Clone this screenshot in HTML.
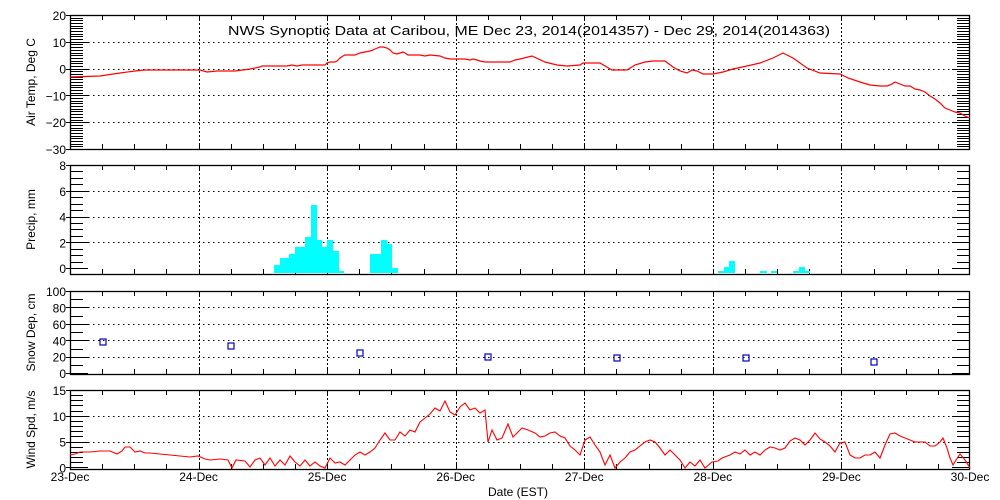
<!DOCTYPE html>
<html><head><meta charset="utf-8"><style>
html,body{margin:0;padding:0;background:#fff;}
svg{display:block;}
text{font-family:"Liberation Sans",sans-serif;font-size:12px;fill:#000;}
</style></head><body>
<svg id="s" width="1000" height="500" xmlns="http://www.w3.org/2000/svg">
<text x="228" y="35" textLength="602" lengthAdjust="spacingAndGlyphs" style="font-size:13px">NWS Synoptic Data at Caribou, ME   Dec 23, 2014(2014357) - Dec 29, 2014(2014363)</text>
</svg>
<script>
var s=document.getElementById('s'),NS='http://www.w3.org/2000/svg';
function el(t,a,txt){var e=document.createElementNS(NS,t);for(var k in a)e.setAttribute(k,a[k]);if(txt!==undefined)e.textContent=txt;s.appendChild(e);return e;}
var L=70,R=970,DX=128.57;
var panels=[
 {t:15,b:149,min:-30,max:20,minor:1,labels:[20,10,0,-10,-20,-30],grid:[10,0,-10,-20],name:'Air Temp, Deg C'},
 {t:165,b:274,min:-0.45,max:8,minor:0.5,labels:[8,6,4,2,0],grid:[6,4,2],name:'Precip, mm'},
 {t:291,b:374,min:-1,max:100,minor:10,labels:[100,80,60,40,20,0],grid:[80,60,40,20],name:'Snow Dep, cm'},
 {t:390,b:469,min:-0.3,max:15,minor:1,labels:[15,10,5,0],grid:[10,5],name:'Wind Spd, m/s'}];
function Y(p,v){return p.b-(v-p.min)/(p.max-p.min)*(p.b-p.t);}
panels.forEach(function(p){
 p.grid.forEach(function(v){var y=Math.round(Y(p,v))+0.5;el('line',{x1:88,x2:952,y1:y,y2:y,stroke:'#000','stroke-dasharray':'1.5 3.5'});});
 for(var d=1;d<7;d++){var x=Math.round(L+d*DX)+0.5;el('line',{x1:x,x2:x,y1:p.t,y2:p.b,stroke:'#000','stroke-dasharray':'2 2'});}
 for(var v=Math.ceil(p.min/p.minor)*p.minor;v<=p.max+1e-6;v+=p.minor){var y=Math.round(Y(p,v))+0.5;
  el('line',{x1:L,x2:L+13,y1:y,y2:y,stroke:'#000'});el('line',{x1:R-13,x2:R,y1:y,y2:y,stroke:'#000'});}
 p.labels.forEach(function(v){var y=Y(p,v);el('line',{x1:L-4,x2:L+18,y1:Math.round(y)+.5,y2:Math.round(y)+.5,stroke:'#000'});el('line',{x1:R-18,x2:R,y1:Math.round(y)+.5,y2:Math.round(y)+.5,stroke:'#000'});
  el('text',{x:66,y:y+5,'text-anchor':'end'},(v<0?'\u2212'+(-v):''+v));});
 for(var i=1;i<28;i++){var x=Math.round(L+i*DX/4)+.5;el('line',{x1:x,x2:x,y1:p.t,y2:p.t+5,stroke:'#000'});el('line',{x1:x,x2:x,y1:p.b-5,y2:p.b,stroke:'#000'});}
 el('rect',{x:L+.5,y:p.t+.5,width:R-L-1,height:p.b-p.t,fill:'none',stroke:'#000','stroke-width':1.3});
 var cy=(p.t+p.b)/2;el('text',{x:0,y:0,transform:'translate(35,'+cy+') rotate(-90)','text-anchor':'middle'},p.name);
});
// temp
el('polyline',{fill:'none',stroke:'#f00','stroke-width':1.2,points:'70,77 100,76 120,73 135,71 145,70 200,70 207,72 217,71 235,71 250,69 260,67 262,66 287,66 292,65 297,66 302,65 325,65 327,63 330,62 335,62 337,61 340,58 343,56 345,55 355,55 360,53 365,52 370,51 373,50 375,49 380,47 383,47 387,48 390,50 393,53 397,54 400,53 403,52 405,53 408,55 420,55 425,56 430,55 440,56 445,58 450,59 465,59 470,60 473,59 477,60 480,61 485,62 510,62 515,60 520,59 532,56 545,62 557,65 567,66 580,65 583,63 600,63 612,70 618,70 627,70 635,65 645,62 653,61 665,61 673,67 680,71 687,73 692,70 697,71 703,74 713,74 723,72 733,69 747,66 760,63 773,58 783,53 793,58 807,68 820,73 840,74 848,78 860,82 870,85 880,86 887,86 892,84 895,82 900,84 905,86 910,86 915,89 920,90 925,92 930,96 935,99 940,103 945,108 950,110 955,112 960,113 965,116 970,118'});
// precip
[[274,280,265],[280,289,258],[289,295,254],[295,305,247],[305,311,237],[311,317,205],[317,322,240],[322,327,247],[327,333,240],[333,339,251],[339,344,271],[370,381,254],[381,387,240],[387,392,244],[392,398,268],[718,724,271],[724,729,267],[729,735,261],[760,767,271],[771,777,271],[793,799,271],[799,805,267],[805,810,271]].forEach(function(b){el('rect',{x:b[0],y:b[2],width:b[1]-b[0],height:273-b[2],fill:'#0ff'});});
// snow
[[103,342],[231,346],[360,353],[488,357],[617,358],[746,358],[874,362]].forEach(function(q){el('rect',{x:q[0]-3,y:q[1]-3,width:6,height:6,fill:'none',stroke:'#00c','stroke-width':1.2});});
// wind
el('polyline',{fill:'none',stroke:'#f00','stroke-width':1.1,points:'70,455 75,454 80,452 90,452 100,451 110,451 117,454 122,451 125,447 130,447 135,452 140,451 145,453 150,453 160,454 170,455 180,456 190,457 198,456 205,459 210,460 220,459 228,460 232,468 236,460 245,461 250,467 255,460 260,458 265,465 270,458 275,466 280,460 285,465 290,456 295,462 300,466 305,460 310,466 315,462 320,466 325,468 330,458 335,463 340,462 345,465 350,460 355,455 360,452 365,455 370,452 375,448 380,440 385,433 390,440 395,440 400,432 405,436 410,430 415,432 420,422 425,418 430,414 435,408 440,411 445,401 450,412 455,415 460,407 465,403 470,410 475,408 480,413 485,410 488,442 492,430 497,440 502,438 508,424 513,437 518,432 522,428 528,430 535,433 540,437 545,436 550,433 555,432 560,436 565,438 570,446 575,450 580,455 585,440 590,437 595,445 600,452 605,465 610,455 615,468 620,462 625,458 630,452 635,450 640,446 645,442 650,440 655,442 660,448 665,455 670,450 675,455 680,460 685,468 690,462 695,466 700,460 705,468 712,462 718,461 722,458 730,455 735,452 740,454 745,450 750,455 755,452 760,455 765,450 770,447 775,448 780,450 785,448 790,441 795,438 800,440 805,445 810,440 815,433 820,439 825,442 830,446 835,452 840,443 845,442 850,455 855,458 860,458 865,455 870,455 875,452 880,458 885,445 890,434 895,433 900,436 905,438 910,440 915,442 925,442 930,446 935,446 940,442 943,438 947,448 950,458 953,465 956,460 960,454 965,460 970,468'});
['23-Dec','24-Dec','25-Dec','26-Dec','27-Dec','28-Dec','29-Dec','30-Dec'].forEach(function(t,i){el('text',{x:L+i*DX,y:481,'text-anchor':'middle'},t);});
el('text',{x:518,y:496,'text-anchor':'middle'},'Date (EST)');
</script>
</body></html>
